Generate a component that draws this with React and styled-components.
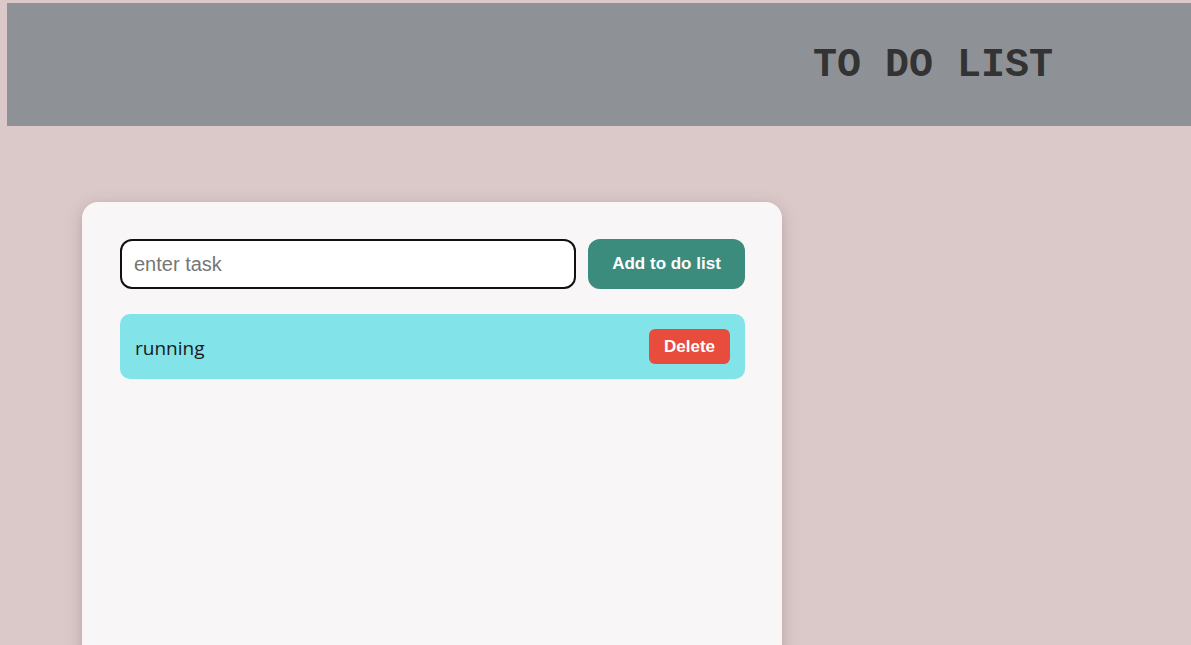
import React, { useState } from "react";
import styled, { createGlobalStyle } from "styled-components";

const GlobalStyle = createGlobalStyle`
  html, body {
    margin: 0;
    padding: 0;
    background: #dbc9c9;
    overflow: hidden;
  }
  body {
    font-family: "Liberation Sans", Arial, sans-serif;
  }
`;

const Page = styled.div`
  min-height: 645px;
  padding: 3px 0 0 7px;
  box-sizing: border-box;
`;

const Header = styled.header`
  height: 123px;
  box-sizing: border-box;
  background: #8e9296;
  display: flex;
  align-items: center;
  padding: 2px 0 0 806px;
`;

const Title = styled.h1`
  margin: 0;
  font-family: "Liberation Mono", "Courier New", monospace;
  font-size: 40px;
  font-weight: bold;
  color: #333333;
  white-space: nowrap;
`;

const Main = styled.main`
  padding: 76px 0 0 75px;
`;

const Card = styled.div`
  width: 700px;
  height: 520px;
  box-sizing: border-box;
  padding: 37px 37px 0 38px;
  display: flex;
  flex-direction: column;
  gap: 25px;
  background: #f8f6f7;
  border-radius: 16px;
  box-shadow: 0 4px 16px rgba(120, 90, 90, 0.35);
`;

const InputRow = styled.form`
  display: flex;
  gap: 12px;
`;

const TaskList = styled.div`
  display: flex;
  flex-direction: column;
  gap: 12px;
`;

const TaskInput = styled.input`
  width: 456px;
  height: 50px;
  box-sizing: border-box;
  border: 2px solid #111;
  border-radius: 12px;
  padding: 0 12px;
  font-family: "Liberation Sans", Arial, sans-serif;
  font-size: 20px;
  background: #fff;
  outline: none;
  &::placeholder {
    color: #767676;
  }
`;

const AddButton = styled.button`
  width: 157px;
  height: 50px;
  border: none;
  border-radius: 12px;
  background: #3b8c7c;
  color: #fff;
  font-family: "Liberation Sans", Arial, sans-serif;
  font-size: 17px;
  font-weight: bold;
  cursor: pointer;
`;

const TaskItem = styled.div`
  height: 65px;
  box-sizing: border-box;
  display: flex;
  align-items: center;
  justify-content: space-between;
  padding: 0 15px;
  background: #82e3e9;
  border-radius: 10px;
`;

const TaskText = styled.span`
  padding-top: 3px;
  font-family: "Open Sans", "Noto Sans", sans-serif;
  font-size: 19px;
  color: #1a1a1a;
`;

const DeleteButton = styled.button`
  width: 81px;
  height: 35px;
  border: none;
  border-radius: 6px;
  background: #e84c3d;
  color: #fff;
  font-family: "Liberation Sans", Arial, sans-serif;
  font-size: 17px;
  font-weight: bold;
  cursor: pointer;
`;

function App() {
  const [tasks, setTasks] = useState(["running"]);
  const [value, setValue] = useState("");

  const handleAdd = (e) => {
    e.preventDefault();
    if (!value.trim()) return;
    setTasks([...tasks, value.trim()]);
    setValue("");
  };

  return (
    <>
      <GlobalStyle />
      <Page>
        <Header>
          <Title>TO DO LIST</Title>
        </Header>
        <Main>
          <Card>
            <InputRow onSubmit={handleAdd}>
              <TaskInput
                placeholder="enter task"
                value={value}
                onChange={(e) => setValue(e.target.value)}
              />
              <AddButton type="submit">Add to do list</AddButton>
            </InputRow>
            <TaskList>
              {tasks.map((task, i) => (
                <TaskItem key={i}>
                  <TaskText>{task}</TaskText>
                  <DeleteButton
                    onClick={() => setTasks(tasks.filter((_, j) => j !== i))}
                  >
                    Delete
                  </DeleteButton>
                </TaskItem>
              ))}
            </TaskList>
          </Card>
        </Main>
      </Page>
    </>
  );
}

export default App;
